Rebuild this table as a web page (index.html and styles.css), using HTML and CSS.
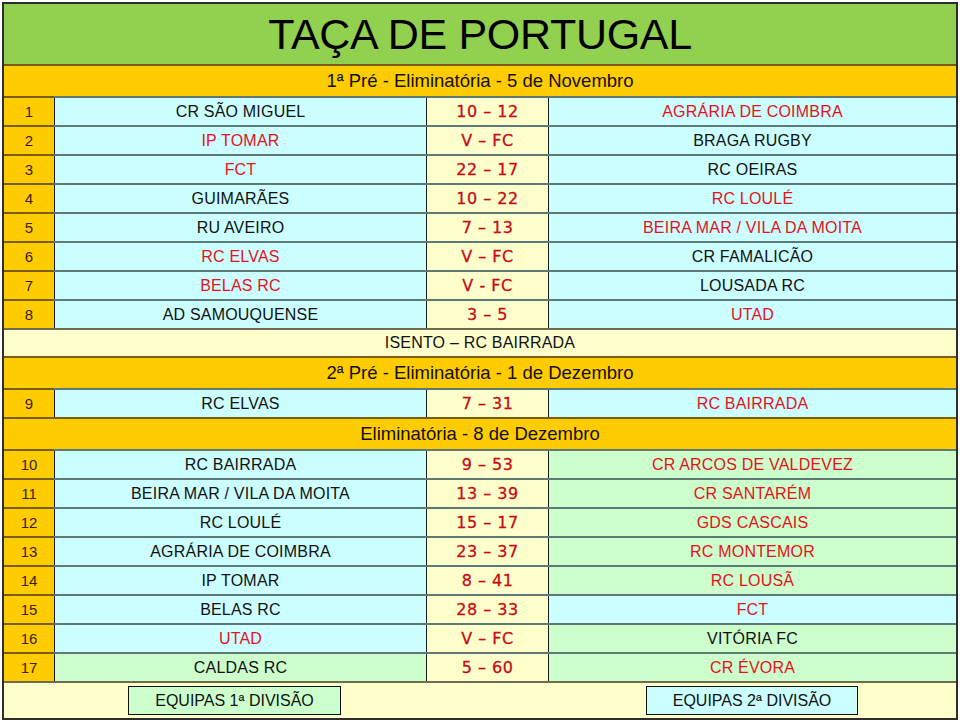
FILE: index.html
```html
<!DOCTYPE html>
<html lang="pt">
<head>
<meta charset="utf-8">
<title>Taça de Portugal</title>
<link rel="stylesheet" href="styles.css">
</head>
<body>
<div class="sheet">
  <div class="title">TAÇA DE PORTUGAL</div>

  <div class="section">1ª Pré - Eliminatória - 5 de Novembro</div>
  <div class="row"><div class="num">1</div><div class="team">CR SÃO MIGUEL</div><div class="score">10 – 12</div><div class="team win">AGRÁRIA DE COIMBRA</div></div>
  <div class="row"><div class="num">2</div><div class="team win">IP TOMAR</div><div class="score">V – FC</div><div class="team">BRAGA RUGBY</div></div>
  <div class="row"><div class="num">3</div><div class="team win">FCT</div><div class="score">22 – 17</div><div class="team">RC OEIRAS</div></div>
  <div class="row"><div class="num">4</div><div class="team">GUIMARÃES</div><div class="score">10 – 22</div><div class="team win">RC LOULÉ</div></div>
  <div class="row"><div class="num">5</div><div class="team">RU AVEIRO</div><div class="score">7 – 13</div><div class="team win">BEIRA MAR / VILA DA MOITA</div></div>
  <div class="row"><div class="num">6</div><div class="team win">RC ELVAS</div><div class="score">V – FC</div><div class="team">CR FAMALICÃO</div></div>
  <div class="row"><div class="num">7</div><div class="team win">BELAS RC</div><div class="score">V - FC</div><div class="team">LOUSADA RC</div></div>
  <div class="row"><div class="num">8</div><div class="team">AD SAMOUQUENSE</div><div class="score">3 – 5</div><div class="team win">UTAD</div></div>
  <div class="bye">ISENTO – RC BAIRRADA</div>

  <div class="section">2ª Pré - Eliminatória - 1 de Dezembro</div>
  <div class="row"><div class="num">9</div><div class="team">RC ELVAS</div><div class="score">7 – 31</div><div class="team win">RC BAIRRADA</div></div>

  <div class="section">Eliminatória - 8 de Dezembro</div>
  <div class="row"><div class="num">10</div><div class="team">RC BAIRRADA</div><div class="score">9 – 53</div><div class="team d2 win">CR ARCOS DE VALDEVEZ</div></div>
  <div class="row"><div class="num">11</div><div class="team">BEIRA MAR / VILA DA MOITA</div><div class="score">13 – 39</div><div class="team d2 win">CR SANTARÉM</div></div>
  <div class="row"><div class="num">12</div><div class="team">RC LOULÉ</div><div class="score">15 – 17</div><div class="team d2 win">GDS CASCAIS</div></div>
  <div class="row"><div class="num">13</div><div class="team">AGRÁRIA DE COIMBRA</div><div class="score">23 – 37</div><div class="team d2 win">RC MONTEMOR</div></div>
  <div class="row"><div class="num">14</div><div class="team">IP TOMAR</div><div class="score">8 – 41</div><div class="team d2 win">RC LOUSÃ</div></div>
  <div class="row"><div class="num">15</div><div class="team">BELAS RC</div><div class="score">28 – 33</div><div class="team win">FCT</div></div>
  <div class="row"><div class="num">16</div><div class="team win">UTAD</div><div class="score">V – FC</div><div class="team d2">VITÓRIA FC</div></div>
  <div class="row"><div class="num">17</div><div class="team d2">CALDAS RC</div><div class="score">5 – 60</div><div class="team d2 win">CR ÉVORA</div></div>

  <div class="legend">
    <div class="key key-d1">EQUIPAS 1ª DIVISÃO</div>
    <div class="key key-d2">EQUIPAS 2ª DIVISÃO</div>
  </div>
</div>
</body>
</html>
```

FILE: styles.css
```css
html, body {
  margin: 0;
  padding: 0;
  background: #ffffff;
  overflow: hidden;
}

.sheet {
  box-sizing: border-box;
  margin: 2px 0 0 2px;
  width: 956px;
  height: 718px;
  border: 2px solid #2e2e2e;
  display: flex;
  flex-direction: column;
  font-family: "Liberation Sans", Arial, sans-serif;
  color: #111;
}

.title {
  height: 60px;
  background: #92d050;
  display: flex;
  align-items: center;
  justify-content: center;
  font-size: 43px;
  color: #000;
  letter-spacing: -0.3px;
}

.section {
  box-sizing: border-box;
  height: 32px;
  border-top: 2px solid #7a5c10;
  background: #ffcc00;
  display: flex;
  align-items: center;
  justify-content: center;
  font-size: 18.5px;
  color: #141000;
}

.row {
  box-sizing: border-box;
  height: 29px;
  border-top: 2px solid #5f7878;
  display: grid;
  grid-template-columns: 50px 372px 122px 1fr;
}

.row > div {
  box-sizing: border-box;
  display: flex;
  align-items: center;
  justify-content: center;
  white-space: nowrap;
}

.num {
  background: #ffcc00;
  color: #3c2000;
  font-size: 15px;
  box-shadow: 0 -2px 0 #7a5c10;
}

.team {
  background: #ccffff;
  border-left: 1px solid #1a1a1a;
  font-size: 16px;
  color: #111;
  letter-spacing: 0.2px;
}

.team.d2 {
  background: #ccffcc;
}

.team.win {
  color: #e8101c;
}

.score {
  background: #ffffcc;
  border-left: 1px solid #1a1a1a;
  font-family: "DejaVu Sans", Verdana, sans-serif;
  font-size: 16px;
  letter-spacing: 0.5px;
  color: #c80a14;
  -webkit-text-stroke: 0.3px #c80a14;
}

.bye {
  box-sizing: border-box;
  height: 28px;
  border-top: 2px solid #6f6a50;
  background: #ffffcc;
  display: flex;
  align-items: center;
  justify-content: center;
  font-size: 16px;
  color: #111;
  letter-spacing: 0.2px;
}

.legend {
  box-sizing: border-box;
  flex: 1;
  border-top: 2px solid #6f6a50;
  background: #ffffcc;
  display: flex;
  align-items: flex-start;
  padding-top: 3px;
}

.key {
  box-sizing: border-box;
  height: 29px;
  border: 1px solid #111;
  display: flex;
  align-items: center;
  justify-content: center;
  font-size: 16px;
  color: #111;
}

.key-d1 {
  width: 213px;
  margin-left: 124px;
  background: #ccffcc;
}

.key-d2 {
  width: 212px;
  margin-left: 305px;
  background: #ccffff;
}
```
